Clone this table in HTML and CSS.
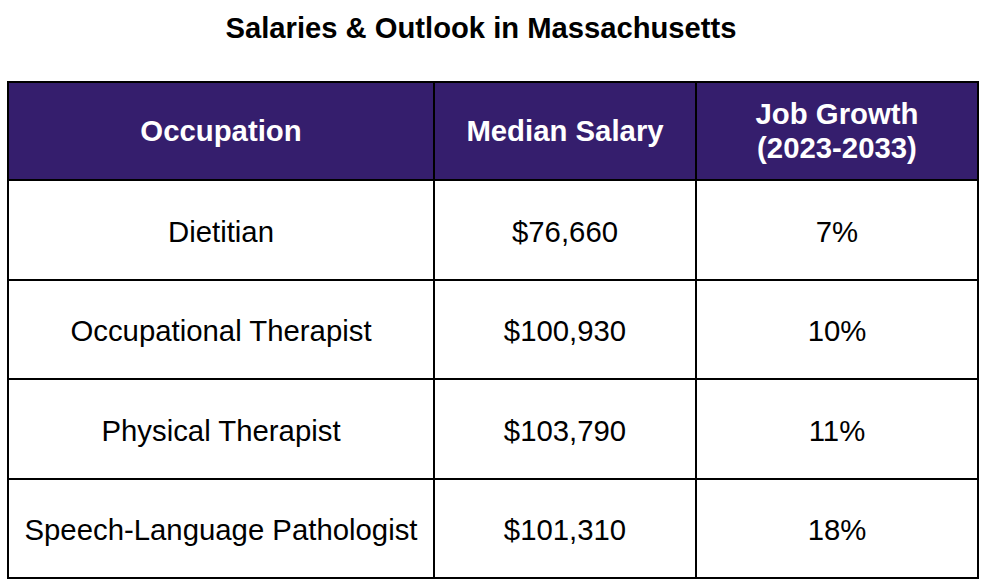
FILE: index.html
```html
<!DOCTYPE html>
<html lang="en">
<head>
<meta charset="utf-8">
<title>Salaries &amp; Outlook in Massachusetts</title>
<link rel="stylesheet" href="styles.css">
</head>
<body>
<div class="page">
  <h1 class="title">Salaries &amp; Outlook in Massachusetts</h1>
  <table class="salary-table">
    <thead>
      <tr class="head-row">
        <th class="col-occ">Occupation</th>
        <th class="col-sal">Median Salary</th>
        <th class="col-grow">Job Growth<br>(2023-2033)</th>
      </tr>
    </thead>
    <tbody>
      <tr class="row-a">
        <td>Dietitian</td>
        <td>$76,660</td>
        <td>7%</td>
      </tr>
      <tr class="row-b">
        <td>Occupational Therapist</td>
        <td>$100,930</td>
        <td>10%</td>
      </tr>
      <tr class="row-a">
        <td>Physical Therapist</td>
        <td>$103,790</td>
        <td>11%</td>
      </tr>
      <tr class="row-b">
        <td>Speech-Language Pathologist</td>
        <td>$101,310</td>
        <td>18%</td>
      </tr>
    </tbody>
  </table>
</div>
</body>
</html>
```
FILE: styles.css
```css
html, body {
  margin: 0;
  padding: 0;
  background: #ffffff;
}

body {
  font-family: "Liberation Sans", Arial, sans-serif;
  color: #000000;
}

.page {
  padding: 12px 7px 0 7px;
}

.title {
  margin: 0 24px 35px 0;
  font-size: 29.2px;
  font-weight: bold;
  text-align: center;
  line-height: 33.6px;
}

.salary-table {
  width: 972px;
  border-collapse: separate;
  border-spacing: 0;
  border-top: 2px solid #000;
  border-left: 2px solid #000;
  table-layout: fixed;
  font-size: 29.33px;
}

.salary-table th,
.salary-table td {
  border-right: 2px solid #000;
  border-bottom: 2px solid #000;
  padding: 0;
  text-align: center;
  vertical-align: middle;
  line-height: 1.149;
}

.col-occ { width: 424px; }
.col-sal { width: 260px; }
.col-grow { width: 280px; }

.head-row th {
  background: #351e6d;
  color: #ffffff;
  font-weight: bold;
  height: 96px;
}

.salary-table td {
  font-weight: normal;
  padding-top: 4px;
}

.row-a td { height: 94px; }
.row-b td { height: 93px; }
```
